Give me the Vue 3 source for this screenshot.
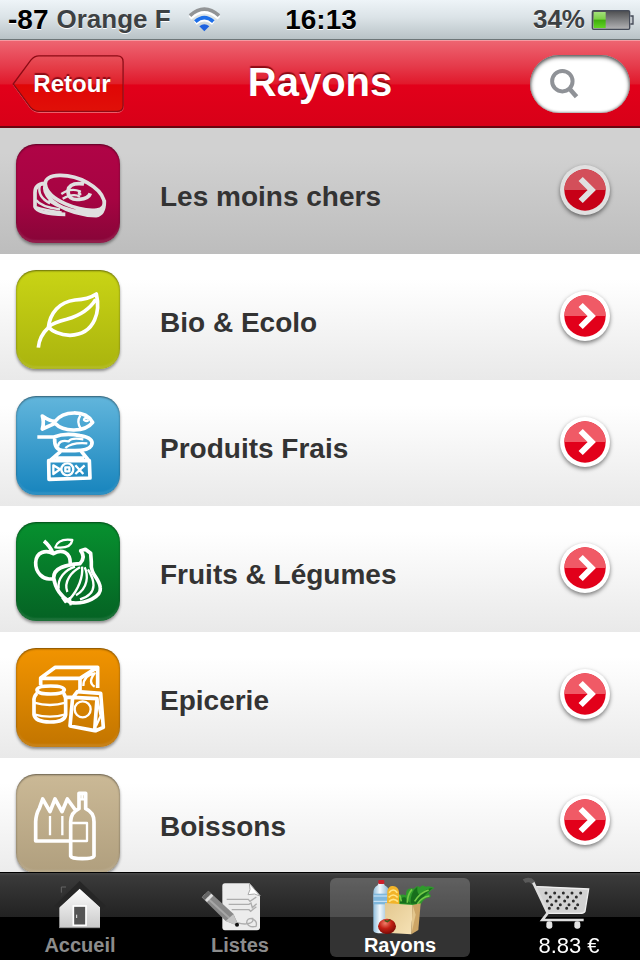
<template>
  <div class="phone">
    <div class="status">
      <div class="carrier">
        <span class="signal">-87</span>
        <span>Orange F</span>
        <svg class="wifi" viewBox="560 18 105 84">
          <g fill="none" stroke="#fff" stroke-width="12" transform="translate(0 4)">
            <path d="M569 50 Q612 10 656 50" />
            <path d="M585 66 Q612 42 639 66" />
          </g>
          <path d="M569 47 Q612 8 656 47" fill="none" stroke="#929496" stroke-width="11" />
          <path d="M585 65 Q612 41 639 65" fill="none" stroke="#1e6fe8" stroke-width="11" />
          <path d="M597 79 Q612 66 627 79 L612 94 Z" fill="#1e62e0" />
        </svg>
      </div>
      <div class="clock">16:13</div>
      <div class="power">
        <span>34%</span>
        <svg class="battery" viewBox="814 24 129 66">
          <defs>
            <linearGradient id="cell" x1="0" y1="0" x2="0" y2="1">
              <stop offset="0" stop-color="#4c4d4f" />
              <stop offset="1" stop-color="#b4b4b6" />
            </linearGradient>
            <linearGradient id="charge" x1="0" y1="0" x2="0" y2="1">
              <stop offset="0" stop-color="#a4e07c" />
              <stop offset=".45" stop-color="#7bd044" />
              <stop offset=".5" stop-color="#3fae0c" />
              <stop offset="1" stop-color="#62d524" />
            </linearGradient>
          </defs>
          <rect x="818" y="29" width="112" height="56" rx="4" fill="url(#cell)" stroke="#454b58" stroke-width="4" />
          <rect x="822" y="33" width="36" height="48" fill="url(#charge)" />
          <path d="M932 45 H940 V69 H932" fill="#c3c9ce" stroke="#454b58" stroke-width="4" />
        </svg>
      </div>
    </div>

    <header class="navbar">
      <button class="back" type="button">
        <svg viewBox="30 162 348 184">
          <defs>
            <linearGradient id="back" x1="0" y1="0" x2="0" y2="1">
              <stop offset="0" stop-color="#e8505a" />
              <stop offset=".5" stop-color="#e0202a" />
              <stop offset=".52" stop-color="#e00606" />
              <stop offset="1" stop-color="#e01008" />
            </linearGradient>
          </defs>
          <path d="M37 258 L90 184 Q101 171 115 171 H355 Q373 171 373 189 V325 Q373 341 355 341 H115 Q101 341 90 330 Z" fill="none" stroke="#f0707a" stroke-width="3" />
          <path d="M36 254 L90 181 Q101 168 115 168 H355 Q373 168 373 186 V321 Q373 338 355 338 H115 Q101 338 90 327 Z" fill="url(#back)" stroke="#8c0a14" stroke-width="4" />
        </svg>
        <span>Retour</span>
      </button>
      <h1>Rayons</h1>
      <label class="search">
        <svg viewBox="686 206 90 94" aria-hidden="true">
          <circle cx="726" cy="246" r="31" fill="none" stroke="#8f9297" stroke-width="12" />
          <path d="M747 268 L769 293" stroke="#8f9297" stroke-width="14" />
        </svg>
        <input v-model="query" type="search" aria-label="Rechercher" />
      </label>
    </header>

    <ul class="list">
      <li v-for="(item, i) in rayons" :key="item.name">
        <a class="row" :class="{ pressed: i === selected }" href="#" @click.prevent="selected = i">
          <span class="tile" :class="item.color">
            <svg :viewBox="item.box">
              <path :d="item.bold" stroke-width="11" />
              <path :d="item.thin" stroke-width="7" />
            </svg>
          </span>
          <span class="name">{{ item.name }}</span>
          <svg class="arrow" viewBox="59 72 156 156">
            <circle cx="137" cy="150" r="75" fill="#fff" />
            <circle cx="137" cy="150" r="62" fill="#e2001a" />
            <path d="M75 150 A62 62 0 0 1 199 150 Z" fill="#f05a66" />
            <path d="M124 117 L157 150 L124 183" fill="none" stroke="#fff" stroke-width="18" />
          </svg>
        </a>
      </li>
    </ul>

    <nav class="tabs">
      <button type="button" class="tab" :class="{ active: tab === 0 }" @click="tab = 0">
        <!-- maison -->
        <svg viewBox="143 40 192 168">
          <defs>
            <linearGradient id="wall" x1="0" y1="0" x2="0" y2="1">
              <stop offset="0" stop-color="#fff" />
              <stop offset="1" stop-color="#c9c9c9" />
            </linearGradient>
          </defs>
          <path d="M182 66 H197 V82 L182 98 Z" fill="#333" />
          <path d="M183 84 V67 H197" fill="none" stroke="#666" stroke-width="3" />
          <path d="M177 190 V126 L238 70 L299 126 V190 Z" fill="url(#wall)" />
          <path d="M162 123 L238 49 L316 123 L305 133 L238 72 L173 132 Z" fill="#262626" />
          <rect x="219" y="124" width="38" height="58" fill="#555" stroke="#fff" stroke-width="5" />
          <path d="M229 150 V160" stroke="#eee" stroke-width="3" />
          <path d="M177 189 H299" stroke="#8c8c8c" stroke-width="3" />
        </svg>
        <span>Accueil</span>
      </button>
      <button type="button" class="tab" :class="{ active: tab === 1 }" @click="tab = 1">
        <!-- feuille et crayon -->
        <svg viewBox="624 40 192 168">
          <path d="M675 56 H748 L780 92 V188 Q780 197 771 197 H675 Q667 197 667 188 V64 Q667 56 675 56 Z" fill="#ececec" />
          <path d="M748 56 Q754 76 744 90 Q765 84 780 94 Z" fill="#fff" stroke="#aaa" stroke-width="3" />
          <g fill="none" stroke="#adadad" stroke-width="4">
            <path d="M680 104 H745 L750 110 L769 97" />
            <path d="M686 119 H747 L753 115 L757 129 L770 117" />
            <path d="M695 135 H747 L752 140 L769 126" />
            <path d="M712 174 C735 182 765 177 758 161 Q740 160 740 174 Q747 190 768 185 Q774 168 754 162" />
          </g>
          <path d="M605 98 L625 78 L700 147 L717 185 L677 169 Z" fill="#888" />
          <path d="M612 91 L688 160" stroke="#a6a6a6" stroke-width="6" />
          <path d="M607 97 L625 79 L633 86 L615 106 Z" fill="#666" />
          <path d="M615 106 L634 87 L640 93 L621 112 Z" fill="#e0e0e0" />
          <path d="M677 169 L700 149 L717 185 Z" fill="#c4c4c4" />
          <circle cx="711" cy="180" r="6" fill="#111" />
        </svg>
        <span>Listes</span>
      </button>
      <button type="button" class="tab" :class="{ active: tab === 2 }" @click="tab = 2">
        <!-- sac de courses -->
        <svg viewBox="144 40 192 168">
          <defs>
            <linearGradient id="bottle" x1="0" y1="0" x2="1" y2="0">
              <stop offset="0" stop-color="#8fbddc" />
              <stop offset=".4" stop-color="#f1f8fc" />
              <stop offset="1" stop-color="#7faece" />
            </linearGradient>
            <linearGradient id="bag" x1="0" y1="0" x2="1" y2="1">
              <stop offset="0" stop-color="#e3c88f" />
              <stop offset="1" stop-color="#f6e2b6" />
            </linearGradient>
            <radialGradient id="tomato" cx=".4" cy=".3" r=".7">
              <stop offset="0" stop-color="#f0806a" />
              <stop offset=".5" stop-color="#c22015" />
              <stop offset="1" stop-color="#7c0b06" />
            </radialGradient>
          </defs>
          <path d="M230 118 Q232 82 258 92 Q256 66 282 72 Q292 60 300 68 Q306 58 316 66 Q330 62 344 70 Q330 76 325 86 Q335 90 331 98 Q318 98 308 110 L300 124 H235 Z" fill="#2f9a2c" />
          <path d="M240 116 Q238 94 256 98 L272 118 Q270 82 292 66 Q290 92 302 88 Q318 72 338 70 Q310 92 296 118 Z" fill="#176e1c" />
          <path d="M262 114 Q262 90 276 74 M284 110 Q300 84 326 76 M244 110 Q242 98 238 90 M292 118 Q306 96 328 94" fill="none" stroke="#74ca48" stroke-width="5" />
          <path d="M176 55 H191 L194 62 Q211 72 209 90 V198 Q206 206 184 206 Q162 206 160 198 V90 Q158 70 173 62 Z" fill="url(#bottle)" />
          <rect x="175" y="46" width="18" height="12" rx="3" fill="#cc1f2a" />
          <path d="M161 87 H208 V119 H161 Z" fill="#7fb7dc" />
          <path d="M161 94 H208 M161 110 H208" stroke="#d5eafa" stroke-width="3" />
          <path d="M201 122 L202 78 Q207 62 219 64 Q235 65 237 82 L238 122 Z" fill="#f2b429" />
          <path d="M207 84 Q220 68 232 84 M206 98 Q220 84 233 98 M207 111 Q220 97 234 111" fill="none" stroke="#ffe486" stroke-width="5" />
          <path d="M195 115 L278 121 L274 209 L196 204 Z" fill="url(#bag)" />
          <path d="M278 121 L302 116 L295 196 L274 209 Z" fill="#cca566" />
          <path d="M278 121 L287 150 L274 209" fill="#e3c68d" />
          <ellipse cx="201" cy="185" rx="27" ry="23" fill="url(#tomato)" />
          <path d="M194 167 L202 171 L211 165" fill="none" stroke="#3d5a18" stroke-width="4" />
        </svg>
        <span>Rayons</span>
      </button>
      <button type="button" class="tab cart" :class="{ active: tab === 3 }" @click="tab = 3">
        <!-- chariot -->
        <svg viewBox="624 40 192 162">
          <path d="M612 50 Q620 44 632 47 L642 56" fill="none" stroke="#5a5a5a" stroke-width="13" />
          <path d="M646 64 L806 73 L795 140 Q792 147 780 147 H682 Z" fill="#d2d2d2" />
          <g fill="none" stroke="#2c2c2c" stroke-width="9" stroke-linecap="round">
            <path d="M678 85 H786" stroke-dasharray="0 26" />
            <path d="M691 97 H786" stroke-dasharray="0 26" />
            <path d="M682 109 H782" stroke-dasharray="0 26" />
            <path d="M695 120 H782" stroke-dasharray="0 26" />
            <path d="M688 131 H780" stroke-dasharray="0 26" />
          </g>
          <path d="M650 66 L806 73 L795 140 Q792 146 780 146 H682" fill="none" stroke="#eee" stroke-width="4" />
          <path d="M640 54 L683 145 L667 166 H791" fill="none" stroke="#ddd" stroke-width="8" />
          <rect x="679" y="170" width="18" height="22" rx="7" fill="#e4e4e4" />
          <rect x="763" y="170" width="18" height="22" rx="7" fill="#e4e4e4" />
        </svg>
        <span>8.83 €</span>
      </button>
    </nav>
  </div>
</template>

<script setup>
import { ref } from 'vue'

const query = ref('')
const selected = ref(0)
const tab = ref(2)

const rayons = [
  {
    name: 'Les moins chers',
    color: 'berry',
    box: '48 42 312 300',
    bold: 'M136 163 C132 128 210 128 262 158 C318 190 328 236 290 240 C240 245 142 212 136 163 Z M136 165 C122 205 200 254 288 257 Q314 252 313 212 M134 160 Q104 162 105 190 V230 Q112 252 196 253 M146 210 Q190 240 240 246 L300 247 M252 162 Q208 156 204 182 Q204 212 238 208 Q266 206 271 190',
    thin: 'M184 192 Q212 172 240 184 Q232 194 244 192 M188 206 Q220 188 240 200 M120 165 Q110 200 150 220 M108 210 Q125 232 180 238 M110 232 Q130 240 185 247'
  },
  {
    name: 'Bio & Ecolo',
    color: 'lime',
    box: '48 42 312 300',
    bold: 'M115 275 Q118 240 145 215 C150 170 178 138 225 132 Q265 130 289 114 C300 160 290 235 210 238 Q165 235 145 213 Q160 200 200 190 Q262 172 287 130',
    thin: ''
  },
  {
    name: 'Produits Frais',
    color: 'sky',
    box: '48 36 312 300',
    bold: 'M127 96 Q150 112 165 112 C190 80 255 76 278 115 C255 145 190 145 165 118 Q145 127 127 135 Q133 115 127 96 Z M112 159 H162 Q195 146 240 155 Q285 162 274 185 Q266 200 225 200 H188 Q162 196 164 164 M182 202 L150 230 M244 202 L265 228 M146 230 H268 L270 282 L147 286 Z M166 222 H252',
    thin: 'M241 94 Q228 115 243 134 M262 102 Q252 100 252 108 Q258 114 266 108 M174 188 Q176 166 206 172 Q214 160 250 166 M196 192 Q216 174 262 178 M184 256 A18 18 0 1 0 220 256 A18 18 0 1 0 184 256 M160 244 L180 256 L160 270 Z M226 244 L250 270 M226 270 L254 244 M196 250 H208 V262 H196 Z'
  },
  {
    name: 'Fruits & Légumes',
    color: 'green',
    box: '48 36 312 300',
    bold: 'M156 206 C130 212 106 188 107 158 C108 126 138 118 160 131 C184 116 212 126 211 162 M159 130 Q150 108 132 93 M242 122 Q258 140 240 161 C200 164 160 172 161 204 C166 238 186 262 212 278 C260 284 304 258 301 234 C298 202 270 196 274 156 L272 130 L256 118 Z',
    thin: 'M166 112 Q175 84 217 90 Q212 118 166 112 Z M176 236 C172 205 195 180 225 170 M202 246 C190 215 215 185 240 172 M228 256 C265 235 265 195 254 172 M208 268 C235 240 250 200 246 170 M240 268 C300 250 280 205 264 178 M186 262 L196 276 L210 264 L212 286'
  },
  {
    name: 'Epicerie',
    color: 'orange',
    box: '48 36 312 300',
    bold: 'M122 148 V126 L166 94 H293 V156 M122 127 H240 L292 94 M240 128 V162 M111 162 Q112 150 152 150 Q192 150 193 162 Q190 174 152 174 Q112 174 111 162 Z M111 172 Q100 182 102 197 V236 Q106 258 150 258 Q194 258 197 236 V197 Q198 182 191 172 M218 184 L291 188 L284 284 L210 270 Z M219 184 L232 167 L302 172 L310 274 L285 285 M198 184 H216',
    thin: 'M102 200 Q150 214 197 200 M102 235 Q150 249 197 235 M224 220 A24 24 0 1 0 272 220 A24 24 0 1 0 224 220 M250 150 Q250 118 284 112 Q262 140 284 152 M292 190 L302 240 L288 270'
  },
  {
    name: 'Boissons',
    color: 'sand',
    box: '48 42 312 300',
    bold: 'M210 243 H107 V185 Q108 162 118 145 L128 117 L150 155 L165 117 L186 155 L202 117 L226 150 M237 100 H257 V146 Q282 157 282 185 V288 Q280 296 247 296 Q215 296 212 288 V185 Q213 157 237 146 Z',
    thin: 'M150 168 V226 M187 168 V226 M214 189 H261 V243 H214 M237 118 H257 M247 100 V118'
  }
]
</script>

<style>
body {
  margin: 0;
  background: #000;
}
</style>

<style scoped>
.phone {
  display: flex;
  flex-direction: column;
  height: 100vh;
  font-family: "Liberation Sans", Arial, sans-serif;
  font-weight: bold;
  background: #fff;
}
button {
  border: 0;
  padding: 0;
  background: none;
  font: inherit;
  cursor: pointer;
}

.status {
  display: grid;
  grid-template-columns: 1fr auto 1fr;
  align-items: center;
  flex: none;
  height: 39px;
  padding: 0 6px 0 8px;
  border-bottom: 1px solid #6e7779;
  background: linear-gradient(#eef4f8, #dbe3e7 45%, #b9c3c7);
  color: #3d4143;
  font-size: 26px;
  text-shadow: 0 1px 0 #fff;
}
.carrier,
.power {
  display: flex;
  align-items: center;
  gap: 8px;
}
.power {
  justify-content: flex-end;
  gap: 6px;
}
.signal,
.clock {
  color: #000;
  font-size: 28px;
}
.wifi {
  width: 35px;
  height: 28px;
  margin-left: 8px;
}
.battery {
  width: 43px;
  height: 22px;
}

.navbar {
  display: grid;
  grid-template-columns: 1fr auto 1fr;
  align-items: center;
  flex: none;
  box-sizing: border-box;
  height: 88px;
  padding: 0 10px;
  border-top: 1px solid #f59aa2;
  border-bottom: 2px solid #6b0510;
  background: linear-gradient(#ee6471, #e53a4a 30%, #e1192c 50%, #e2001a 52%, #d80018);
  color: #fff;
}
.back {
  position: relative;
  width: 116px;
  height: 60px;
  padding-left: 8px;
  color: #fff;
  font-size: 24px;
  text-shadow: 0 -2px 1px #8c0a14;
}
.back svg {
  position: absolute;
  inset: 0;
  width: 100%;
  height: 100%;
}
.back span {
  position: relative;
}
h1 {
  margin: 0;
  padding-bottom: 4px;
  font-size: 40px;
  line-height: 48px;
  text-shadow: 0 -2px 1px #8c0a14;
}
.search {
  display: flex;
  align-items: center;
  justify-self: end;
  box-sizing: border-box;
  width: 100px;
  height: 58px;
  padding: 0 12px 0 19px;
  border-radius: 29px;
  background: #fff;
  box-shadow: inset 0 2px 4px #555, inset 0 0 3px #777;
}
.search svg {
  flex: none;
  width: 30px;
  height: 31px;
}
.search input {
  min-width: 0;
  width: 100%;
  border: 0;
  padding: 0;
  outline: 0;
  background: none;
  font-size: 24px;
}

.list {
  flex: 1;
  min-height: 0;
  margin: 0;
  padding: 0;
  list-style: none;
  overflow-y: auto;
  scrollbar-width: none;
}
.row {
  display: flex;
  align-items: flex-start;
  padding: 16px 29px 4px 16px;
  background: linear-gradient(#fff 20%, #e9e9e9);
  color: #333;
  text-decoration: none;
}
.row.pressed {
  background: linear-gradient(#d1d1d1 20%, #bdbdbd);
}
.tile {
  flex: none;
  width: 104px;
  height: 99px;
  border-radius: 20px;
  box-shadow: inset 0 1px 2px rgba(0, 0, 0, 0.5), inset 0 -3px 2px rgba(255, 255, 255, 0.1), 0 2px 3px rgba(0, 0, 0, 0.4);
}
.tile svg {
  display: block;
  width: 104px;
  height: 100px;
  fill: none;
  stroke: #fff;
  stroke-linejoin: round;
}
.pressed .tile svg {
  filter: brightness(0.88);
}
.berry { background: linear-gradient(#b00446, #a60442 55%, #870538); }
.lime { background: linear-gradient(#c9d415, #aab40e); }
.sky { background: linear-gradient(#62b6dc, #1784bd); }
.green { background: linear-gradient(#07912f, #056224); }
.orange { background: linear-gradient(#f29400, #c27500); }
.sand { background: linear-gradient(#cbb996, #b09f7e); }
.name {
  flex: 1;
  margin-left: 40px;
  font-size: 28px;
  line-height: 106px;
}
.arrow {
  flex: none;
  width: 52px;
  height: 52px;
  margin-top: 20px;
  filter: drop-shadow(0 2px 2px rgba(0, 0, 0, 0.5));
}
.pressed .arrow {
  filter: brightness(0.88) drop-shadow(0 2px 2px rgba(0, 0, 0, 0.5));
}

.tabs {
  display: grid;
  grid-template-columns: repeat(4, 1fr);
  flex: none;
  box-sizing: border-box;
  height: 88px;
  padding: 5px 0 3px;
  border-top: 1px solid #000;
  background: linear-gradient(#484848, #3a3a3a 3px, #222 44px, #000 44px);
}
.tab {
  display: flex;
  flex-direction: column;
  align-items: center;
  margin: 0 10px;
  border-radius: 6px;
  color: #8c8c8c;
  font-size: 20px;
  line-height: 22px;
}
.tab.active {
  background: rgba(255, 255, 255, 0.2);
  color: #fff;
}
.tab svg {
  width: 64px;
  height: 56px;
  overflow: visible;
}
.tab.cart {
  color: #fff;
  font-size: 22px;
  font-weight: normal;
}
.cart svg {
  height: 54px;
}
.cart span {
  padding: 3px 0 0 18px;
}
</style>
